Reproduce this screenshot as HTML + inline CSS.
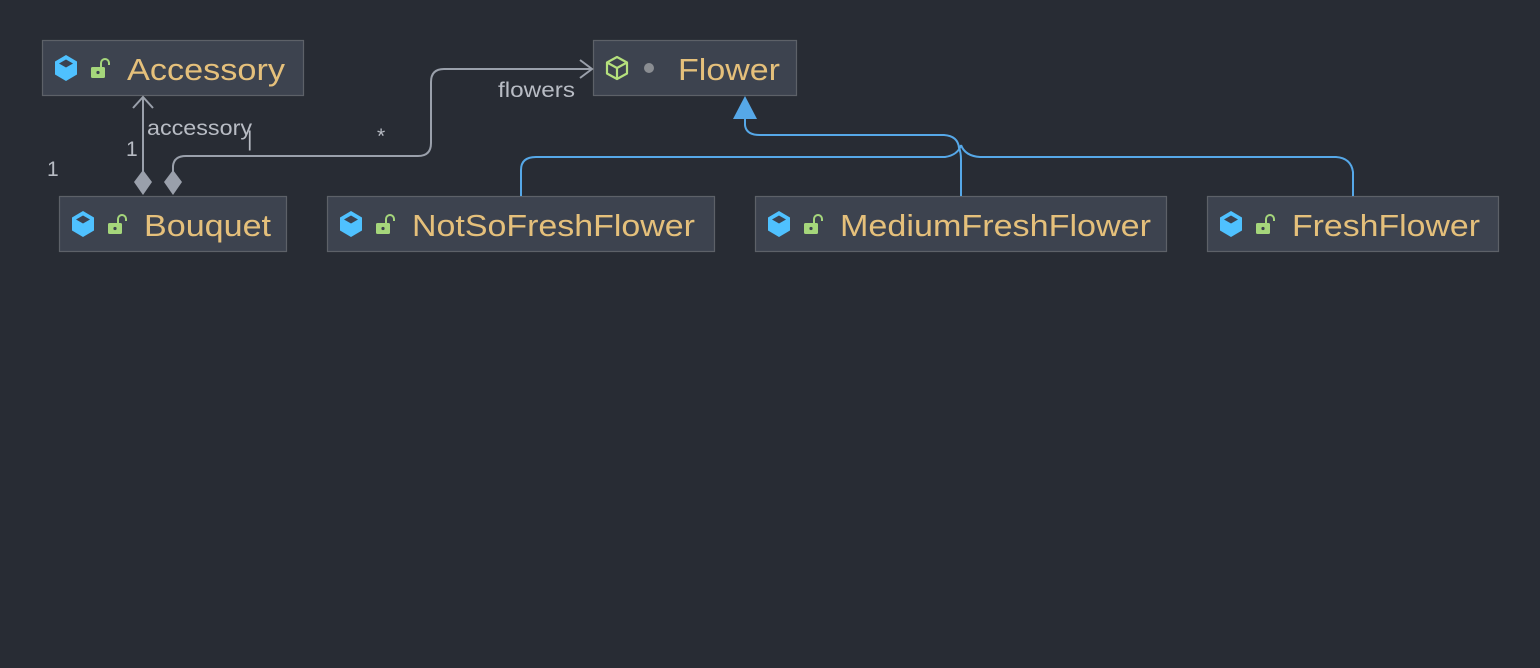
<!DOCTYPE html>
<html><head><meta charset="utf-8"><style>
html,body{margin:0;padding:0;background:#282c34;}
svg{display:block}
</style></head><body>
<svg width="1540" height="668" viewBox="0 0 1540 668" xmlns="http://www.w3.org/2000/svg" font-family="Liberation Sans, sans-serif">
<rect width="1540" height="668" fill="#282c34"/>
<defs>
<g id="cube"><path d="M0,-13 L11,-6.5 L11,6.5 L0,13 L-11,6.5 L-11,-6.5 Z" fill="#4fc1ff"/><path d="M-7,-4.5 L0,-8.5 L7,-4.5 L0,-0.5 Z" fill="#3b4250"/></g>
<g id="lock"><rect x="-8" y="-3" width="14" height="11" rx="1.5" fill="#a5d67b"/><path d="M2,-3 V-7 a4,4 0 0 1 8,0 V-5" fill="none" stroke="#a5d67b" stroke-width="2"/><circle cx="-1" cy="2.5" r="1.6" fill="#3b4250"/></g>
</defs>
<g stroke="#5d6168" stroke-width="1.2" fill="#3d434f">
<rect x="42.5" y="40.5" width="261" height="55"/>
<rect x="593.5" y="40.5" width="203" height="55"/>
<rect x="59.5" y="196.5" width="227" height="55"/>
<rect x="327.5" y="196.5" width="387" height="55"/>
<rect x="755.5" y="196.5" width="411" height="55"/>
<rect x="1207.5" y="196.5" width="291" height="55"/>
</g>
<g stroke="#9aa0ab" stroke-width="2" fill="none">
<path d="M143,97 V172"/><path d="M133,108 L143,97 L153,108"/>
<path d="M173,172 V166 Q174,156 186,156 H418 Q431,156 431,143 V82 Q431,69 444,69 H592"/>
<path d="M580,60 L592,69 L580,78"/>
</g>
<path d="M143,170 L152,182 L143,195 L134,182 Z" fill="#9aa0ab"/>
<path d="M173,170 L182,182 L173,195 L164,182 Z" fill="#9aa0ab"/>
<g stroke="#56a8e8" stroke-width="2" fill="none">
<path d="M745,108 V125 Q746,135 760,135 H944 Q958,136 959,148 Q961,152 961,160 V196"/>
<path d="M521,196 V170 Q521,157 536,157 H945 Q958,155 961,145"/>
<path d="M1353,196 V172 Q1351,158 1336,157 H980 Q965,156 961,145"/>
</g>
<path d="M745,96 L757,119 L733,119 Z" fill="#56a8e8"/>
<g fill="#b8bcc4" font-size="21">
<text x="147" y="135" textLength="105" lengthAdjust="spacingAndGlyphs">accessory</text>
<text x="126" y="156">1</text>
<text x="47" y="176">1</text>
<text x="247" y="146">|</text>
<text x="377" y="143">*</text>
<text x="498" y="97" textLength="77" lengthAdjust="spacingAndGlyphs">flowers</text>
</g>
<use href="#cube" x="66" y="68"/><use href="#lock" x="99" y="70"/>
<use href="#cube" x="83" y="224"/><use href="#lock" x="116" y="226"/>
<use href="#cube" x="351" y="224"/><use href="#lock" x="384" y="226"/>
<use href="#cube" x="779" y="224"/><use href="#lock" x="812" y="226"/>
<use href="#cube" x="1231" y="224"/><use href="#lock" x="1264" y="226"/>
<g transform="translate(617,68)" fill="none" stroke="#b5e07d" stroke-width="2.2" stroke-linejoin="round">
<path d="M0,-11 L10,-5.5 L10,5.5 L0,11 L-10,5.5 L-10,-5.5 Z"/><path d="M-10,-5.5 L0,0 L10,-5.5 M0,0 V11"/>
</g>
<circle cx="649" cy="68" r="5" fill="#8a8d92"/>
<g fill="#e5c07b" font-size="31">
<text x="127" y="80" textLength="158" lengthAdjust="spacingAndGlyphs">Accessory</text>
<text x="678" y="80" textLength="102" lengthAdjust="spacingAndGlyphs">Flower</text>
<text x="144" y="236" textLength="127" lengthAdjust="spacingAndGlyphs">Bouquet</text>
<text x="412" y="236" textLength="283" lengthAdjust="spacingAndGlyphs">NotSoFreshFlower</text>
<text x="840" y="236" textLength="311" lengthAdjust="spacingAndGlyphs">MediumFreshFlower</text>
<text x="1292" y="236" textLength="188" lengthAdjust="spacingAndGlyphs">FreshFlower</text>
</g>
</svg>
</body></html>
